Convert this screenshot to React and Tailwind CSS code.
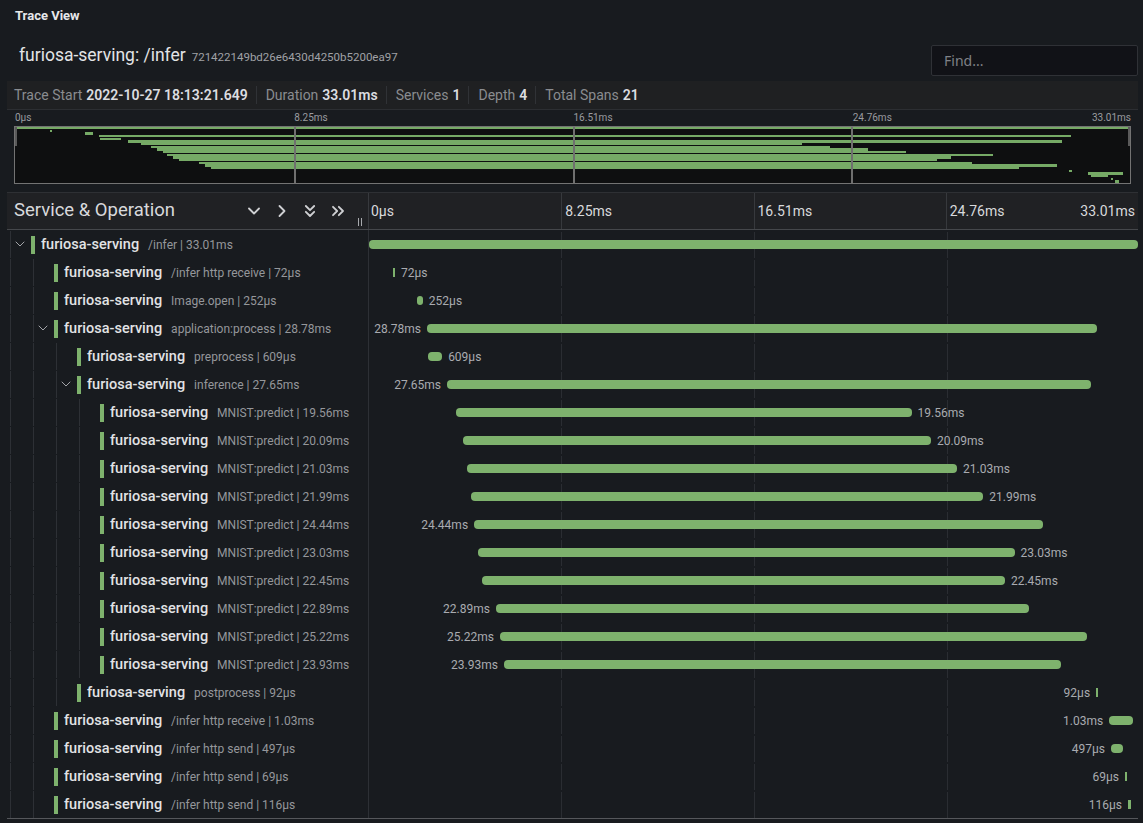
import React from 'react';
import { ChevronDown, ChevronRight, ChevronsDown, ChevronsRight } from 'lucide-react';

const TOTAL = 33.01;
const W = 769;

const spans = [
  { d: 0, op: '/infer', dur: '33.01ms', s: 0, ms: 33.01, kids: true, side: null },
  { d: 1, op: '/infer http receive', dur: '72μs', s: 1.03, ms: 0.072, side: 'r' },
  { d: 1, op: 'Image.open', dur: '252μs', s: 2.06, ms: 0.252, side: 'r' },
  { d: 1, op: 'application:process', dur: '28.78ms', s: 2.49, ms: 28.78, kids: true, side: 'l' },
  { d: 2, op: 'preprocess', dur: '609μs', s: 2.53, ms: 0.609, side: 'r' },
  { d: 2, op: 'inference', dur: '27.65ms', s: 3.35, ms: 27.65, kids: true, side: 'l' },
  { d: 3, op: 'MNIST:predict', dur: '19.56ms', s: 3.73, ms: 19.56, side: 'r' },
  { d: 3, op: 'MNIST:predict', dur: '20.09ms', s: 4.03, ms: 20.09, side: 'r' },
  { d: 3, op: 'MNIST:predict', dur: '21.03ms', s: 4.21, ms: 21.03, side: 'r' },
  { d: 3, op: 'MNIST:predict', dur: '21.99ms', s: 4.38, ms: 21.99, side: 'r' },
  { d: 3, op: 'MNIST:predict', dur: '24.44ms', s: 4.51, ms: 24.44, side: 'l' },
  { d: 3, op: 'MNIST:predict', dur: '23.03ms', s: 4.68, ms: 23.03, side: 'r' },
  { d: 3, op: 'MNIST:predict', dur: '22.45ms', s: 4.85, ms: 22.45, side: 'r' },
  { d: 3, op: 'MNIST:predict', dur: '22.89ms', s: 5.45, ms: 22.89, side: 'l' },
  { d: 3, op: 'MNIST:predict', dur: '25.22ms', s: 5.62, ms: 25.22, side: 'l' },
  { d: 3, op: 'MNIST:predict', dur: '23.93ms', s: 5.79, ms: 23.93, side: 'l' },
  { d: 2, op: 'postprocess', dur: '92μs', s: 31.21, ms: 0.092, side: 'l' },
  { d: 1, op: '/infer http receive', dur: '1.03ms', s: 31.77, ms: 1.03, side: 'l' },
  { d: 1, op: '/infer http send', dur: '497μs', s: 31.85, ms: 0.497, side: 'l' },
  { d: 1, op: '/infer http send', dur: '69μs', s: 32.45, ms: 0.069, side: 'l' },
  { d: 1, op: '/infer http send', dur: '116μs', s: 32.58, ms: 0.116, side: 'l' },
];

function Stat({ k, v, first }) {
  return (
    <div className={first ? 'flex items-center pr-[8px]' : 'flex items-center h-[18px] border-l border-[#303236] pl-[9px] pr-[8px]'}>
      <span className="text-[#8a8c90]">{k}</span>
      <span className="ml-[4px] font-semibold text-[#dcdde0]">{v}</span>
    </div>
  );
}

function LeftRow({ sp }) {
  const blocks = [];
  for (let i = 0; i <= sp.d; i++) {
    blocks.push(
      <div key={i} className="w-[23px] shrink-0 flex items-stretch pl-[3px]">
        <div className="w-px mt-px bg-[#2d3035]" />
        {i === sp.d && sp.kids ? (
          <div className="flex items-center ml-px">
            <ChevronDown size={16} strokeWidth={1.5} className="text-[#a3a5a9]" />
          </div>
        ) : null}
      </div>
    );
  }
  return (
    <div className="flex h-[28px] items-stretch">
      {blocks}
      <div className="flex items-center ml-px whitespace-nowrap pt-px">
        <div className="w-[4px] h-[18px] bg-[#7eb26d]" />
        <span className="ml-[6px] text-[14.5px] font-medium text-[#e2e3e5]">furiosa-serving</span>
        <span className="ml-[9px] text-[12px] text-[#95979b]">
          {sp.op} | {sp.dur}
        </span>
      </div>
    </div>
  );
}

function RightRow({ sp }) {
  const left = (sp.s / TOTAL) * W;
  const width = Math.max(2, (sp.ms / TOTAL) * W);
  const end = left + width;
  return (
    <div className="relative h-[28px]">
      <div className="absolute left-[192px] top-[2px] bottom-0 w-px bg-[#2a2d32]" />
      <div className="absolute left-[385px] top-[2px] bottom-0 w-px bg-[#2a2d32]" />
      <div className="absolute left-[578px] top-[2px] bottom-0 w-px bg-[#2a2d32]" />
      <div
        className={width > 4 ? 'absolute top-[10px] h-[9px] rounded-[4px] bg-[#7eb26d]' : 'absolute top-[10px] h-[9px] bg-[#7eb26d]'}
        style={{ left: left, width: width }}
      />
      {sp.side === 'r' ? (
        <span className="absolute top-[8px] text-[12px] leading-[15px] text-[#a9abb0] whitespace-nowrap" style={{ left: end + 6 }}>
          {sp.dur}
        </span>
      ) : null}
      {sp.side === 'l' ? (
        <span className="absolute top-[8px] text-[12px] leading-[15px] text-[#a9abb0] whitespace-nowrap" style={{ right: W - left + 6 }}>
          {sp.dur}
        </span>
      ) : null}
    </div>
  );
}

export default function App() {
  const rowH = 56 / 21;
  return (
    <div className="w-[1143px] h-[823px] overflow-hidden bg-[#181b1f] text-[#d8d9da] font-[Roboto,sans-serif] pl-[7px] pr-[5px]">
      <div className="h-[32px] flex items-center pl-[8px] text-[13px] font-bold text-[#e6e7ea]">Trace View</div>

      <div className="h-[49px] flex justify-between">
        <div className="pt-[11px] pl-[12px] flex items-baseline whitespace-nowrap">
          <span className="text-[17.5px] leading-[24px] text-[#e3e4e6]">furiosa-serving: /infer</span>
          <span className="ml-[6px] text-[11.5px] text-[#a0a2a6]">721422149bd26e6430d4250b5200ea97</span>
        </div>
        <div className="mt-[13px] w-[207px] h-[31px] bg-[#111217] border border-[#2f3136] rounded-[2px] flex items-center pl-[12px] text-[14px] text-[#7f8186] font-['Noto_Sans',sans-serif]">
          Find...
        </div>
      </div>

      <div className="h-[29px] bg-[#1f2022] border-b border-[#2c2e32] flex items-center pl-[7px] text-[14px] whitespace-nowrap">
        <Stat first k="Trace Start" v="2022-10-27 18:13:21.649" />
        <Stat k="Duration" v="33.01ms" />
        <Stat k="Services" v="1" />
        <Stat k="Depth" v="4" />
        <Stat k="Total Spans" v="21" />
      </div>

      <div className="px-[7px] pt-[2px] h-[82px]">
        <div className="grid grid-cols-4 text-[10px] leading-[12px] text-[#9a9ca0]">
          <div className="pl-px">0μs</div>
          <div className="pl-px">8.25ms</div>
          <div className="pl-px">16.51ms</div>
          <div className="pl-px flex justify-between">
            <span>24.76ms</span>
            <span>33.01ms</span>
          </div>
        </div>
        <div className="relative mt-[2px] h-[58px] border border-[#737373] bg-[#0e0f10] overflow-hidden">
          {spans.map((sp, i) => (
            <div
              key={i}
              className="absolute bg-[#76aa66]"
              style={{
                left: `${(sp.s / TOTAL) * 100}%`,
                width: `max(2px, ${(sp.ms / TOTAL) * 100}%)`,
                top: i * rowH,
                height: rowH - 0.4,
              }}
            />
          ))}
          <div className="absolute left-[25%] top-0 bottom-0 w-[2px] bg-[#6f6f6f]" />
          <div className="absolute left-[50%] top-0 bottom-0 w-[2px] bg-[#6f6f6f]" />
          <div className="absolute left-[75%] top-0 bottom-0 w-[2px] bg-[#6f6f6f]" />
          <div className="absolute left-0 top-0 h-[19px] w-[2px] bg-[#5a5a5a]" />
          <div className="absolute right-0 top-0 h-[19px] w-[2px] bg-[#5a5a5a]" />
        </div>
      </div>

      <div className="h-[38px] flex bg-[#202124] border-t border-[#2e3034] border-b border-b-[#45474b]">
        <div className="w-[362px] shrink-0 flex items-center border-r border-[#37393d] pl-[7px]">
          <span className="text-[18.5px] text-[#d8d9dc]">Service &amp; Operation</span>
          <div className="ml-auto flex items-center text-[#cfd0d3]">
            <div className="w-[28px] flex justify-center"><ChevronDown size={20} strokeWidth={2.2} /></div>
            <div className="w-[28px] flex justify-center"><ChevronRight size={20} strokeWidth={2.2} /></div>
            <div className="w-[28px] flex justify-center"><ChevronsDown size={20} strokeWidth={2.2} /></div>
            <div className="w-[28px] flex justify-center"><ChevronsRight size={20} strokeWidth={2.2} /></div>
          </div>
          <div className="w-[16px] self-stretch flex items-end justify-center pb-[3px]">
            <div className="flex gap-[2px]">
              <div className="w-px h-[8px] bg-[#a8aaae]" />
              <div className="w-px h-[8px] bg-[#a8aaae]" />
            </div>
          </div>
        </div>
        <div className="flex-1 grid grid-cols-4 text-[14px] text-[#d8d9dc]">
          <div className="flex items-center pl-[2px]">0μs</div>
          <div className="flex items-center pl-[3px] border-l border-[#37393d]">8.25ms</div>
          <div className="flex items-center pl-[3px] border-l border-[#37393d]">16.51ms</div>
          <div className="flex items-center justify-between pl-[3px] pr-[3px] border-l border-[#37393d]">
            <span>24.76ms</span>
            <span>33.01ms</span>
          </div>
        </div>
      </div>

      <div className="flex border-b border-[#55575b]">
        <div className="w-[362px] shrink-0 border-r border-[#2d3035]">
          {spans.map((sp, i) => (
            <LeftRow key={i} sp={sp} />
          ))}
        </div>
        <div className="flex-1">
          {spans.map((sp, i) => (
            <RightRow key={i} sp={sp} />
          ))}
        </div>
      </div>
    </div>
  );
}
